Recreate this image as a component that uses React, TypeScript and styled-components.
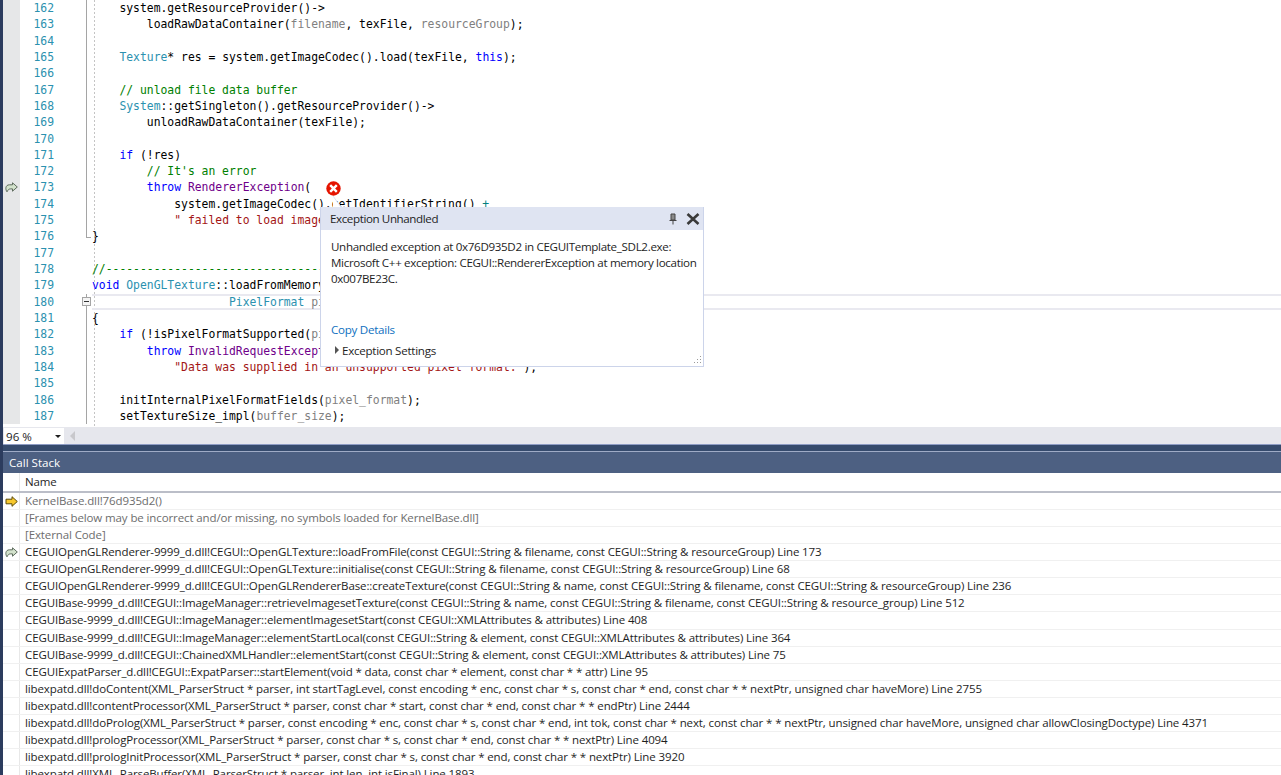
import styled, { createGlobalStyle } from "styled-components";

const GlobalStyle = createGlobalStyle`
  html, body {
    margin: 0;
    padding: 0;
    height: 100%;
    overflow: hidden;
    background: #ffffff;
  }
`;

const Page = styled.div`
  display: flex;
  flex-direction: column;
  height: 775px;
  overflow: hidden;
  border-left: 3px solid #2c3c5e;
`;

const Editor = styled.div`
  position: relative;
  height: 427px;
  overflow: hidden;
  flex: none;
`;

const IndentGuide = styled.div`
  position: absolute;
  left: 91px;
  top: 0;
  bottom: 0;
  width: 1px;
  background: repeating-linear-gradient(to bottom, #c4c4c4 0 2px, transparent 2px 4px);
`;

const CodeRow = styled.div`
  display: flex;
  height: 16.32px;
  line-height: 16.32px;
  font-family: "DejaVu Sans Mono", monospace;
  font-size: 11.38px;
  white-space: pre;
  color: #000000;
`;

const Glyph = styled.div`
  flex: none;
  width: 17px;
  background: #e6e7e8;
  display: flex;
  align-items: center;
  justify-content: center;
  overflow: visible;
`;

const LineNumber = styled.div`
  flex: none;
  width: 34px;
  text-align: right;
  color: #2b91af;
`;

const Fold = styled.div<{ $kind: "line" | "end" | "box" | "none" }>`
  position: relative;
  flex: none;
  width: 38px;

  &::before {
    content: "";
    position: absolute;
    left: 32px;
    top: 0;
    bottom: ${(p) => (p.$kind === "end" ? "50%" : "0")};
    width: 1px;
    background: ${(p) => (p.$kind === "none" ? "transparent" : "#a5a5a5")};
  }

  &::after {
    content: "";
    position: absolute;
    left: 32px;
    top: 50%;
    width: 5px;
    height: 1px;
    background: ${(p) => (p.$kind === "end" ? "#a5a5a5" : "transparent")};
  }
`;

const FoldBox = styled.span`
  position: absolute;
  z-index: 1;
  left: 28px;
  top: 3px;
  width: 7px;
  height: 7px;
  border: 1px solid #a5a5a5;
  background: #f4f4f4;

  &::after {
    content: "";
    position: absolute;
    left: 1px;
    right: 1px;
    top: 3px;
    height: 1px;
    background: #333333;
  }
`;

const Code = styled.div<{ $current: boolean }>`
  position: relative;
  flex: 1;
  box-shadow: ${(p) => (p.$current ? "inset 0 2px 0 #e9e9f0, inset 0 -2px 0 #e9e9f0" : "none")};
`;

const tokenColors = {
  t: "#2b91af",
  k: "#0000ff",
  c: "#008000",
  s: "#a31515",
  p: "#808080",
  m: "#6f008a",
  o: "#008080",
  n: "#000000",
};

type TokenKind = keyof typeof tokenColors;

const Token = styled.span<{ $kind: TokenKind }>`
  color: ${(p) => tokenColors[p.$kind]};
`;

const ErrorBadge = styled.svg`
  position: absolute;
  left: 323px;
  top: 181px;
  z-index: 3;
`;

const Tail = styled.svg`
  position: absolute;
  left: 330px;
  top: 196px;
  z-index: 3;
`;

const Popup = styled.div`
  position: absolute;
  left: 317px;
  top: 207px;
  width: 382px;
  height: 159px;
  z-index: 2;
  display: flex;
  flex-direction: column;
  background: #ffffff;
  border: 1px solid #ccd4ea;
  border-top: none;
  font-family: "Open Sans", sans-serif;
  font-size: 11.6px;
  color: #1e1e1e;
`;

const PopupHeader = styled.div`
  display: flex;
  align-items: center;
  gap: 4px;
  height: 23px;
  padding: 0 0 0 9px;
  background: #dfe4f2;
  flex: none;
`;

const PopupTitle = styled.div`
  flex: 1;
  letter-spacing: -0.4px;
`;

const PopupIcon = styled.svg`
  display: block;
  flex: none;
`;

const PopupBody = styled.div`
  padding: 9px 0 0 10px;
  line-height: 15.8px;
  white-space: pre;
  letter-spacing: -0.33px;
  flex: 1;
`;

const PopupLink = styled.div`
  margin: 0 0 0 10px;
  color: #0e70c0;
  line-height: 16px;
  letter-spacing: -0.27px;
`;

const PopupSettings = styled.div`
  display: flex;
  align-items: center;
  gap: 3px;
  height: 16px;
  margin: 4px 0 8px 14px;
  letter-spacing: -0.27px;
`;

const Caret = styled.span`
  width: 0;
  height: 0;
  border-left: 4px solid #555555;
  border-top: 4px solid transparent;
  border-bottom: 4px solid transparent;
`;

const Grip = styled.svg`
  position: absolute;
  right: 1px;
  bottom: 1px;
`;

const EditorFooter = styled.div`
  display: flex;
  align-items: flex-start;
  flex: none;
  height: 17px;
  background: #e6e7ed;
  padding-left: 1px;
`;

const ZoomCombo = styled.div`
  display: flex;
  align-items: center;
  justify-content: space-between;
  box-sizing: border-box;
  width: 60px;
  height: 16px;
  margin-top: 1px;
  padding: 0 3px 0 2px;
  background: #ffffff;
  font-family: "Open Sans", sans-serif;
  font-size: 11.6px;
  color: #1e1e1e;
`;

const ComboArrow = styled.span`
  width: 0;
  height: 0;
  border-top: 3px solid #1e1e1e;
  border-left: 3px solid transparent;
  border-right: 3px solid transparent;
`;

const ScrollArrow = styled.span`
  width: 0;
  height: 0;
  margin: 4px 0 0 6px;
  border-right: 5px solid #c8c8cc;
  border-top: 5px solid transparent;
  border-bottom: 5px solid transparent;
`;

const Splitter = styled.div`
  flex: none;
  height: 8px;
  box-sizing: border-box;
  background: #364b6d;
  border-top: 1px solid #8e9cc4;
  border-bottom: 1px solid #9fabc6;
`;

const PanelTitle = styled.div`
  flex: none;
  height: 21px;
  line-height: 21px;
  padding-left: 6px;
  background: #4d6082;
  color: #ffffff;
  font-family: "Open Sans", sans-serif;
  font-size: 11.6px;
`;

const StackTable = styled.div`
  flex: 1;
  overflow: hidden;
  font-family: "Open Sans", sans-serif;
  font-size: 11.5px;
  color: #1e1e1e;
  white-space: pre;
`;

const StackHeader = styled.div`
  display: flex;
  height: 20px;
  line-height: 18px;
  box-sizing: border-box;
  border-bottom: 2px solid #bbbec8;
`;

const StackRow = styled.div`
  display: flex;
  height: 17.07px;
  line-height: 16px;
  box-sizing: border-box;
  border-bottom: 1px solid #f0f0f0;
`;

const MarkerCell = styled.div`
  flex: none;
  width: 17px;
  box-sizing: border-box;
  border-right: 1px solid #e8e8e8;
  display: flex;
  align-items: center;
  justify-content: center;
`;

const NameCell = styled.div<{ $muted?: boolean }>`
  flex: 1;
  padding-left: 5px;
  letter-spacing: -0.11px;
  color: ${(p) => (p.$muted ? "#6d6d6d" : "#1e1e1e")};
`;

type Tok = [TokenKind, string];

const n = (text: string): Tok => ["n", text];

type Line = { no: number; toks: Tok[]; fold?: "line" | "end" | "box" | "none"; current?: boolean };

const indent = (count: number) => " ".repeat(count);

const codeLines: Line[] = [
  { no: 162, toks: [n(indent(4) + "system.getResourceProvider()->")] },
  {
    no: 163,
    toks: [
      n(indent(8) + "loadRawDataContainer("),
      ["p", "filename"],
      n(", texFile, "),
      ["p", "resourceGroup"],
      n(");"),
    ],
  },
  { no: 164, toks: [] },
  {
    no: 165,
    toks: [
      n(indent(4)),
      ["t", "Texture"],
      n("* res = system.getImageCodec().load(texFile, "),
      ["k", "this"],
      n(");"),
    ],
  },
  { no: 166, toks: [] },
  { no: 167, toks: [["c", indent(4) + "// unload file data buffer"]] },
  {
    no: 168,
    toks: [n(indent(4)), ["t", "System"], n("::getSingleton().getResourceProvider()->")],
  },
  { no: 169, toks: [n(indent(8) + "unloadRawDataContainer(texFile);")] },
  { no: 170, toks: [] },
  { no: 171, toks: [n(indent(4)), ["k", "if"], n(" (!res)")] },
  { no: 172, toks: [["c", indent(8) + "// It's an error"]] },
  { no: 173, toks: [n(indent(8)), ["k", "throw"], n(" "), ["m", "RendererException"], n("(")] },
  {
    no: 174,
    toks: [n(indent(12) + "system.getImageCodec().getIdentifierString() "), ["o", "+"]],
  },
  { no: 175, toks: [n(indent(12)), ["s", "\" failed to load image '\""]] },
  { no: 176, toks: [n("}")], fold: "end" },
  { no: 177, toks: [], fold: "none" },
  { no: 178, toks: [["c", "//" + "-".repeat(64)]], fold: "none" },
  {
    no: 179,
    toks: [
      ["k", "void"],
      n(" "),
      ["t", "OpenGLTexture"],
      n("::loadFromMemory(const void* buffer,"),
    ],
    fold: "none",
  },
  {
    no: 180,
    toks: [n(indent(20)), ["t", "PixelFormat"], n(" "), ["p", "pixel_format"], n(")")],
    fold: "box",
    current: true,
  },
  { no: 181, toks: [n("{")] },
  {
    no: 182,
    toks: [
      n(indent(4)),
      ["k", "if"],
      n(" (!isPixelFormatSupported("),
      ["p", "pixel_format"],
      n("))"),
    ],
  },
  {
    no: 183,
    toks: [
      n(indent(8)),
      ["k", "throw"],
      n(" "),
      ["m", "InvalidRequestException"],
      n("("),
    ],
  },
  {
    no: 184,
    toks: [
      n(indent(12)),
      ["s", "\"Data was supplied in an unsupported pixel format.\""],
      n(");"),
    ],
  },
  { no: 185, toks: [] },
  {
    no: 186,
    toks: [n(indent(4) + "initInternalPixelFormatFields("), ["p", "pixel_format"], n(");")],
  },
  {
    no: 187,
    toks: [n(indent(4) + "setTextureSize_impl("), ["p", "buffer_size"], n(");")],
  },
];

const stackFrames = [
  "KernelBase.dll!76d935d2()",
  "[Frames below may be incorrect and/or missing, no symbols loaded for KernelBase.dll]",
  "[External Code]",
  "CEGUIOpenGLRenderer-9999_d.dll!CEGUI::OpenGLTexture::loadFromFile(const CEGUI::String & filename, const CEGUI::String & resourceGroup) Line 173",
  "CEGUIOpenGLRenderer-9999_d.dll!CEGUI::OpenGLTexture::initialise(const CEGUI::String & filename, const CEGUI::String & resourceGroup) Line 68",
  "CEGUIOpenGLRenderer-9999_d.dll!CEGUI::OpenGLRendererBase::createTexture(const CEGUI::String & name, const CEGUI::String & filename, const CEGUI::String & resourceGroup) Line 236",
  "CEGUIBase-9999_d.dll!CEGUI::ImageManager::retrieveImagesetTexture(const CEGUI::String & name, const CEGUI::String & filename, const CEGUI::String & resource_group) Line 512",
  "CEGUIBase-9999_d.dll!CEGUI::ImageManager::elementImagesetStart(const CEGUI::XMLAttributes & attributes) Line 408",
  "CEGUIBase-9999_d.dll!CEGUI::ImageManager::elementStartLocal(const CEGUI::String & element, const CEGUI::XMLAttributes & attributes) Line 364",
  "CEGUIBase-9999_d.dll!CEGUI::ChainedXMLHandler::elementStart(const CEGUI::String & element, const CEGUI::XMLAttributes & attributes) Line 75",
  "CEGUIExpatParser_d.dll!CEGUI::ExpatParser::startElement(void * data, const char * element, const char * * attr) Line 95",
  "libexpatd.dll!doContent(XML_ParserStruct * parser, int startTagLevel, const encoding * enc, const char * s, const char * end, const char * * nextPtr, unsigned char haveMore) Line 2755",
  "libexpatd.dll!contentProcessor(XML_ParserStruct * parser, const char * start, const char * end, const char * * endPtr) Line 2444",
  "libexpatd.dll!doProlog(XML_ParserStruct * parser, const encoding * enc, const char * s, const char * end, int tok, const char * next, const char * * nextPtr, unsigned char haveMore, unsigned char allowClosingDoctype) Line 4371",
  "libexpatd.dll!prologProcessor(XML_ParserStruct * parser, const char * s, const char * end, const char * * nextPtr) Line 4094",
  "libexpatd.dll!prologInitProcessor(XML_ParserStruct * parser, const char * s, const char * end, const char * * nextPtr) Line 3920",
  "libexpatd.dll!XML_ParseBuffer(XML_ParserStruct * parser, int len, int isFinal) Line 1893",
];

function ReturnArrow() {
  return (
    <svg width="13" height="11" viewBox="0 0 13 11" style={{ flex: "none" }}>
      <path
        d="M7.5 .8 L12.3 5 L7.5 9.2 V6.9 H5.5 C3.8 6.9 2.8 8 2 9.8 C.2 7.5 .2 2.8 4.5 2.8 H7.5 Z"
        fill="#d3e2cc"
        stroke="#5d6b5d"
        strokeWidth="1"
      />
    </svg>
  );
}

function CurrentArrow() {
  return (
    <svg width="13" height="11" viewBox="0 0 13 11" style={{ flex: "none" }}>
      <path
        d="M7 .7 L12.3 5.5 L7 10.3 V7.8 H1 V3.2 H7 Z"
        fill="#f7c82e"
        stroke="#5c4a05"
        strokeWidth="1"
      />
    </svg>
  );
}

function App() {
  return (
    <>
      <GlobalStyle />
      <Page>
        <Editor>
          <IndentGuide />
          <div>
            {codeLines.map((line) => (
              <CodeRow key={line.no}>
                <Glyph>{line.no === 173 && <ReturnArrow />}</Glyph>
                <LineNumber>{line.no}</LineNumber>
                <Fold $kind={line.fold ?? "line"}>{line.fold === "box" && <FoldBox />}</Fold>
                <Code $current={!!line.current}>
                  {line.toks.map((tok, i) => (
                    <Token key={i} $kind={tok[0]}>
                      {tok[1]}
                    </Token>
                  ))}
                </Code>
              </CodeRow>
            ))}
          </div>
          <ErrorBadge width="15" height="15" viewBox="0 0 15 15">
            <circle cx="7.5" cy="7.5" r="7.2" fill="#e51400" />
            <path d="M4.2 4.2 L10.8 10.8 M10.8 4.2 L4.2 10.8" stroke="#ffffff" strokeWidth="2.4" />
          </ErrorBadge>
          <Tail width="10" height="12" viewBox="0 0 10 12">
            <path d="M0 0 L8 11 H0 Z" fill="#ffffff" />
            <path d="M0 0 L8 11" stroke="#dfe4f2" fill="none" />
          </Tail>
          <Popup>
            <PopupHeader>
              <PopupTitle>Exception Unhandled</PopupTitle>
              <PopupIcon width="12" height="12" viewBox="0 0 12 12">
                <path d="M4 1 H8 V7 H4 Z M2.5 7.5 H9.5 M6 8 V11.5" fill="#8a8a8a" stroke="#444444" />
              </PopupIcon>
              <PopupIcon width="20" height="16" viewBox="0 0 20 16">
                <path d="M4.5 3 L15.5 13 M15.5 3 L4.5 13" stroke="#3a3a3a" strokeWidth="2.6" />
              </PopupIcon>
            </PopupHeader>
            <PopupBody>
              {"Unhandled exception at 0x76D935D2 in CEGUITemplate_SDL2.exe:\nMicrosoft C++ exception: CEGUI::RendererException at memory location\n0x007BE23C."}
            </PopupBody>
            <PopupLink>Copy Details</PopupLink>
            <PopupSettings>
              <Caret />
              Exception Settings
            </PopupSettings>
            <Grip width="10" height="10" viewBox="0 0 10 10">
              <path d="M8 1h1v1H8z M5 4h1v1H5z M8 4h1v1H8z M2 7h1v1H2z M5 7h1v1H5z M8 7h1v1H8z" fill="#9a9a9a" />
            </Grip>
          </Popup>
        </Editor>
        <EditorFooter>
          <ZoomCombo>
            96 %
            <ComboArrow />
          </ZoomCombo>
          <ScrollArrow />
        </EditorFooter>
        <Splitter />
        <PanelTitle>Call Stack</PanelTitle>
        <StackTable>
          <StackHeader>
            <MarkerCell />
            <NameCell>Name</NameCell>
          </StackHeader>
          {stackFrames.map((frame, i) => (
            <StackRow key={frame}>
              <MarkerCell>
                {i === 0 && <CurrentArrow />}
                {i === 3 && <ReturnArrow />}
              </MarkerCell>
              <NameCell $muted={i < 3}>{frame}</NameCell>
            </StackRow>
          ))}
        </StackTable>
      </Page>
    </>
  );
}

export default App;
